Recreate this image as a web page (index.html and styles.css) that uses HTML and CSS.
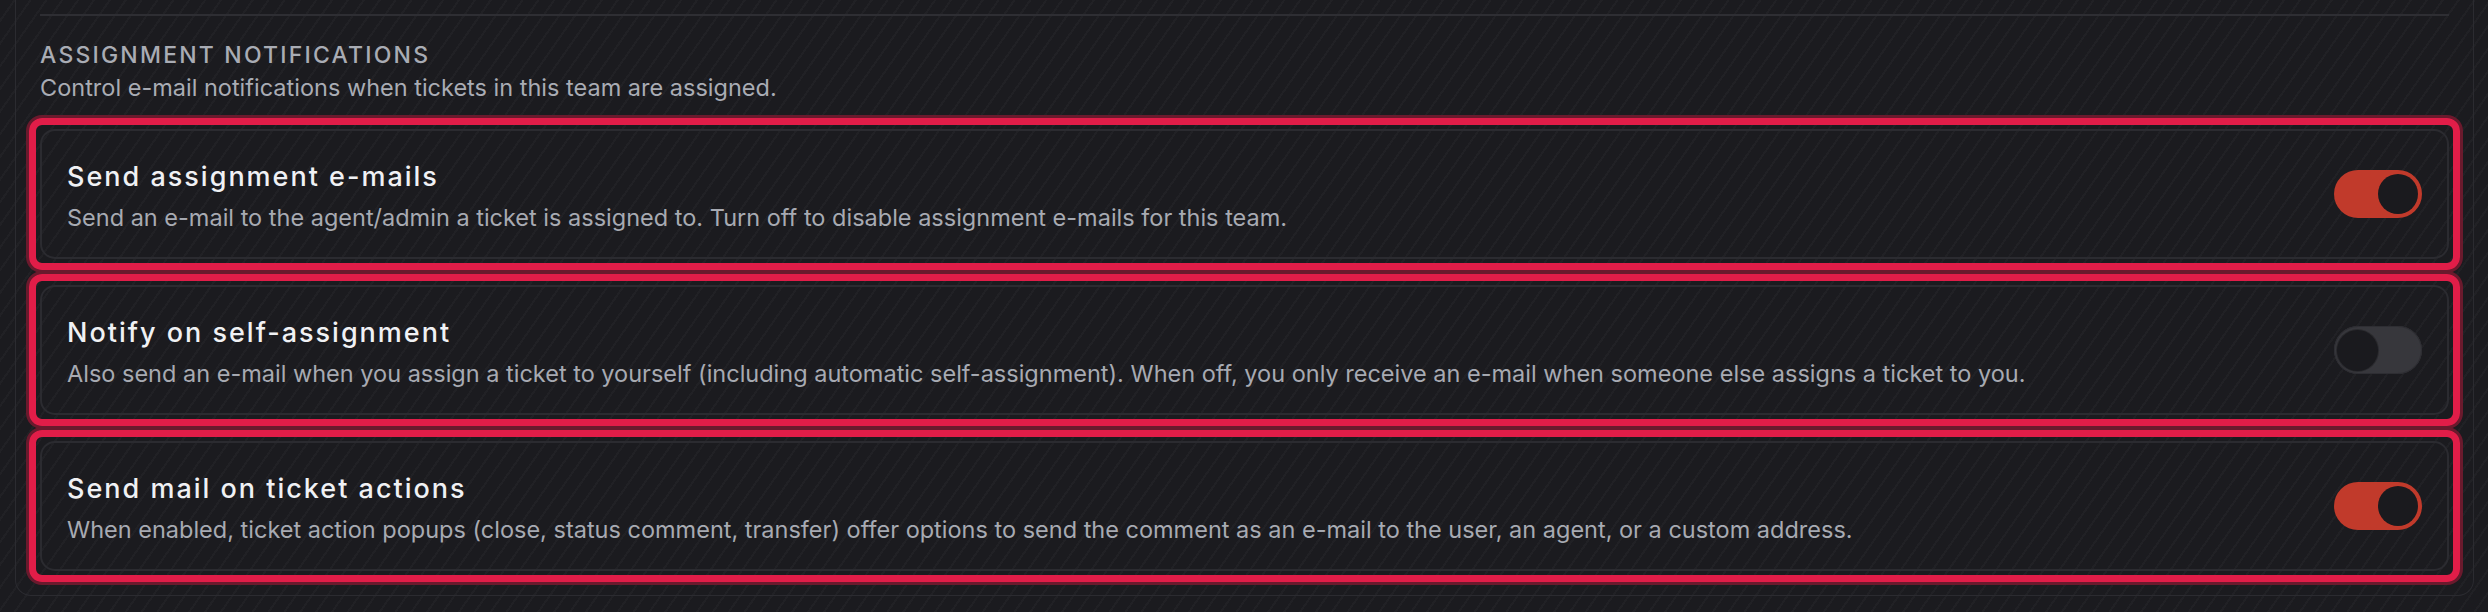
FILE: index.html
```html
<!DOCTYPE html>
<html lang="en">
<head>
<meta charset="utf-8">
<title>Assignment notifications</title>
<link rel="stylesheet" href="styles.css">
</head>
<body>
<div class="panel">
  <div class="rule"></div>
  <section class="section">
    <h2 class="section-title">Assignment notifications</h2>
    <p class="section-desc">Control e-mail notifications when tickets in this team are assigned.</p>
    <div class="list">
      <div class="card">
        <div class="card-text">
          <div class="card-title">Send assignment e-mails</div>
          <div class="card-desc">Send an e-mail to the agent/admin a ticket is assigned to. Turn off to disable assignment e-mails for this team.</div>
        </div>
        <span class="toggle on"><span class="knob"></span></span>
      </div>
      <div class="card">
        <div class="card-text">
          <div class="card-title">Notify on self-assignment</div>
          <div class="card-desc">Also send an e-mail when you assign a ticket to yourself (including automatic self-assignment). When off, you only receive an e-mail when someone else assigns a ticket to you.</div>
        </div>
        <span class="toggle off"><span class="knob"></span></span>
      </div>
      <div class="card">
        <div class="card-text">
          <div class="card-title">Send mail on ticket actions</div>
          <div class="card-desc">When enabled, ticket action popups (close, status comment, transfer) offer options to send the comment as an e-mail to the user, an agent, or a custom address.</div>
        </div>
        <span class="toggle on"><span class="knob"></span></span>
      </div>
    </div>
  </section>
</div>
</body>
</html>
```
FILE: styles.css
```css
* { box-sizing: border-box; }
html, body { height: 100%; }
body {
  margin: 0;
  background-color: #1b1b1f;
  background-image: repeating-linear-gradient(125deg, rgba(255,255,255,0) 0 11px, rgba(255,255,255,0.028) 11px 13px);
  font-family: Inter, "Noto Sans", "Liberation Sans", sans-serif;
  color: #e9eaee;
  overflow: hidden;
}
.panel {
  margin: 0 14px 0 15px;
  border: 1px solid #2b2b30;
  border-top: none;
  border-radius: 0 0 16px 16px;
  padding: 14px 24px 24px 24px;
}
.rule {
  height: 2px;
  background: #2e2e33;
}
.section { padding-top: 24px; }
.section-title {
  margin: 0;
  font-size: 23px;
  line-height: 30px;
  font-weight: 500;
  text-transform: uppercase;
  color: #a9acb4;
  letter-spacing: 2.2px;
}
.section-desc {
  margin: 3px 0 0;
  font-size: 23.5px;
  line-height: 30px;
  color: #a9acb4;
}
.list {
  margin-top: 26px;
  display: flex;
  flex-direction: column;
  gap: 26px;
}
.card {
  position: relative;
  height: 130px;
  border: 2px solid #2b2b30;
  border-radius: 15px;
  padding: 0 25px;
  display: flex;
  align-items: center;
  justify-content: space-between;
}
.card::after {
  content: "";
  position: absolute;
  inset: -13px;
  border: 7px solid #e11d48;
  border-radius: 13px;
  box-shadow: 0 0 0 3px #6a1a2d;
  pointer-events: none;
}
.card-text { display: flex; flex-direction: column; gap: 8px; padding-top: 6px; }
.card-title {
  font-size: 27px;
  line-height: 34px;
  font-weight: 500;
  letter-spacing: 2px;
  color: #f0f1f4;
}
.card-desc {
  font-size: 23.5px;
  line-height: 32px;
  color: #a7aab2;
}
.toggle {
  flex: none;
  width: 88px;
  height: 48px;
  border-radius: 24px;
  display: flex;
  align-items: center;
  padding: 4px;
}
.toggle.on { background: #c13a2b; justify-content: flex-end; }
.toggle.off { background: #37373c; justify-content: flex-start; padding: 3px; box-shadow: inset 0 0 0 1px #2e2e33; }
.knob {
  width: 40px;
  height: 40px;
  border-radius: 50%;
  background: #1a1a1e;
}
.toggle.off .knob { width: 41px; height: 41px; box-shadow: 0 0 0 1px #2a2a2e; }
```
